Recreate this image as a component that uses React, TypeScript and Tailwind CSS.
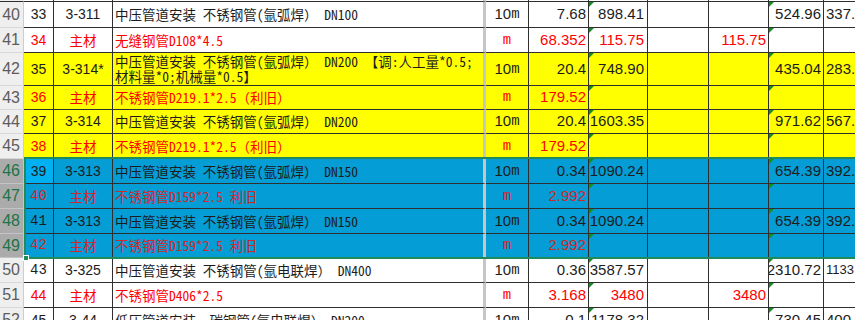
import type { ReactNode } from "react";
import clsx from "clsx";

type Tone = "white" | "yellow" | "blue";

type Line = {
  hdr: string;
  no: string;
  code: string;
  desc: ReactNode;
  unit: "10m" | "m";
  qty: string;
  f?: string;
  g?: string;
  hh?: string;
  i?: string;
  j?: string;
  red?: boolean;
  serifNo?: boolean;
  smallJ?: boolean;
  tone: Tone;
  height: string;
};

const NUM = "font-['Liberation_Sans',Arial,sans-serif] text-[15px]";
const NARROW = "font-['Liberation_Sans_Narrow','Liberation_Sans',Arial,sans-serif] text-[14px]";
const CJK = "font-['Noto_Sans_Mono_CJK_SC','Noto_Sans_CJK_SC',monospace] text-[13.5px]";
const MONO = "font-['Liberation_Mono',monospace] text-[14px]";

const GRID =
  "grid grid-cols-[24px_30px_59px_373px_43px_60px_59px_61px_60px_55px_61px]";

const rows: Line[] = [
  { hdr: "40", no: "33", code: "3-311", desc: "中压管道安装 不锈钢管(氩弧焊） DN100", unit: "10m", qty: "7.68", f: "898.41", i: "524.96", j: "337.26", tone: "white", height: "h-[27px]" },
  { hdr: "41", no: "34", code: "主材", desc: "无缝钢管D108*4.5", unit: "m", qty: "68.352", f: "115.75", hh: "115.75", red: true, tone: "white", height: "h-[25px]" },
  {
    hdr: "42",
    no: "35",
    code: "3-314*",
    desc: (
      <>
        中压管道安装 不锈钢管(氩弧焊） DN200 【调:人工量*0.5;
        <br />
        材料量*0;机械量*0.5】
      </>
    ),
    unit: "10m",
    qty: "20.4",
    f: "748.90",
    i: "435.04",
    j: "283.12",
    tone: "yellow",
    height: "h-[33px]",
  },
  { hdr: "43", no: "36", code: "主材", desc: "不锈钢管D219.1*2.5（利旧）", unit: "m", qty: "179.52", red: true, tone: "yellow", height: "h-[24px]" },
  { hdr: "44", no: "37", code: "3-314", desc: "中压管道安装 不锈钢管(氩弧焊） DN200", unit: "10m", qty: "20.4", f: "1603.35", i: "971.62", j: "567.40", tone: "yellow", height: "h-[24px]" },
  { hdr: "45", no: "38", code: "主材", desc: "不锈钢管D219.1*2.5（利旧）", unit: "m", qty: "179.52", red: true, tone: "yellow", height: "h-[25px]" },
  { hdr: "46", no: "39", code: "3-313", desc: "中压管道安装 不锈钢管(氩弧焊） DN150", unit: "10m", qty: "0.34", f: "1090.24", i: "654.39", j: "392.64", tone: "blue", height: "h-[25px]" },
  { hdr: "47", no: "40", code: "主材", desc: "不锈钢管D159*2.5 利旧", unit: "m", qty: "2.992", red: true, serifNo: true, tone: "blue", height: "h-[25px]" },
  { hdr: "48", no: "41", code: "3-313", desc: "中压管道安装 不锈钢管(氩弧焊） DN150", unit: "10m", qty: "0.34", f: "1090.24", i: "654.39", j: "392.64", serifNo: true, tone: "blue", height: "h-[25px]" },
  { hdr: "49", no: "42", code: "主材", desc: "不锈钢管D159*2.5 利旧", unit: "m", qty: "2.992", red: true, serifNo: true, tone: "blue", height: "h-[24px]" },
  { hdr: "50", no: "43", code: "3-325", desc: "中压管道安装 不锈钢管(氩电联焊） DN400", unit: "10m", qty: "0.36", f: "3587.57", i: "2310.72", j: "1133.9", smallJ: true, serifNo: true, tone: "white", height: "h-[25px]" },
  { hdr: "51", no: "44", code: "主材", desc: "不锈钢管D406*2.5", unit: "m", qty: "3.168", f: "3480", hh: "3480", red: true, tone: "white", height: "h-[25px]" },
  { hdr: "52", no: "45", code: "3-44", desc: "低压管道安装  碳钢管(氩电联焊） DN200", unit: "10m", qty: "0.1", f: "1178.32", i: "730.45", j: "400.18", tone: "white", height: "h-[25px]" },
];

const toneBg: Record<Tone, string> = {
  white: "bg-white",
  yellow: "bg-[#ffff00]",
  blue: "bg-[#049dd6]",
};

function Tick() {
  return (
    <span className="absolute left-0 top-0 h-0 w-0 border-r-[5px] border-t-[5px] border-r-transparent border-t-[#12901c]" />
  );
}

function Cell({
  children,
  className,
  top,
}: {
  children?: ReactNode;
  className?: string;
  top?: boolean;
}) {
  return (
    <div
      className={clsx(
        "relative flex items-center overflow-hidden whitespace-pre border-b border-r border-[#2f2f2f]",
        top && "border-t",
        className,
      )}
    >
      {children}
    </div>
  );
}

function SheetRow({ r, top }: { r: Line; top?: boolean }) {
  const selected = r.tone === "blue";
  const ink = r.red
    ? r.tone === "blue"
      ? "text-[#cf2a2a]"
      : "text-[#ff0000]"
    : "text-[#1c1c1c]";
  const bg = toneBg[r.tone];

  return (
    <div className={clsx(GRID, r.height)}>
      <div
        className={clsx(
          "flex items-center justify-end overflow-hidden border-b border-r pr-[3px] font-['Liberation_Sans',Arial,sans-serif] text-[16px]",
          top && "border-t border-t-[#2f2f2f]",
          selected
            ? "border-b-[#c4c4c4] border-r-[#c4c4c4] bg-[#ababab] text-[#217346]"
            : "border-b-[#d8d8d8] border-r-[#cdcdcd] bg-[#efefef] text-[#5c5c5c]",
        )}
      >
        {r.hdr}
      </div>
      <Cell
        top={top}
        className={clsx(
          "justify-center",
          ink,
          r.serifNo ? MONO : NARROW,
          r.no === "39" ? "bg-[#00b0f0]" : bg,
        )}
      >
        {r.no}
      </Cell>
      <Cell
        top={top}
        className={clsx("justify-center", ink, bg, r.code === "主材" ? CJK : NARROW)}
      >
        {r.code}
      </Cell>
      <Cell
        top={top}
        className={clsx(
          "border-r-[3px] border-r-[#c6c6c6] pl-[2px] leading-[15px]",
          ink,
          bg,
          CJK,
        )}
      >
        <div>{r.desc}</div>
      </Cell>
      <Cell top={top} className={clsx("justify-center", ink, bg)}>
        {r.unit === "10m" ? <span className={NUM}>10</span> : null}
        <span className={MONO}>m</span>
      </Cell>
      <Cell top={top} className={clsx("justify-end pr-[2px]", ink, bg, NUM)}>
        {r.qty}
      </Cell>
      <Cell top={top} className={clsx("justify-end pr-[3px]", ink, bg, NUM)}>
        <Tick />
        {r.f}
      </Cell>
      <Cell top={top} className={clsx("justify-end pr-[2px]", ink, bg, NUM)}>
        {r.g}
      </Cell>
      <Cell top={top} className={clsx("justify-end pr-[2px]", ink, bg, NUM)}>
        {r.hh}
      </Cell>
      <Cell top={top} className={clsx("justify-end pr-[2px]", ink, bg, NUM)}>
        <Tick />
        {r.i}
      </Cell>
      <Cell
        top={top}
        className={clsx(
          "pl-[2px]",
          ink,
          bg,
          r.smallJ
            ? "font-['Liberation_Sans',Arial,sans-serif] text-[13px]"
            : NUM,
        )}
      >
        {r.j}
      </Cell>
    </div>
  );
}

export default function App() {
  return (
    <div className="relative h-[320px] w-[855px] overflow-hidden bg-white">
      <div className="w-[885px]">
        <div className={clsx(GRID, "h-[1px]")}>
          <div className="bg-[#efefef]" />
          {Array.from({ length: 10 }).map((_, k) => (
            <div
              key={k}
              className={clsx(
                "bg-white",
                k === 2
                  ? "border-r-[3px] border-[#c6c6c6]"
                  : "border-r border-[#2f2f2f]",
              )}
            />
          ))}
        </div>
        {rows.map((r, idx) => (
          <SheetRow key={r.hdr} r={r} top={idx === 0} />
        ))}
      </div>

      <div className="pointer-events-none absolute left-[24px] top-[157px] h-[102px] w-[840px] border-2 border-[#1f8a5b]" />
      <div className="pointer-events-none absolute left-[23px] top-[255px] h-[6px] w-[6px] border border-white bg-[#1f8a5b]" />
    </div>
  );
}
